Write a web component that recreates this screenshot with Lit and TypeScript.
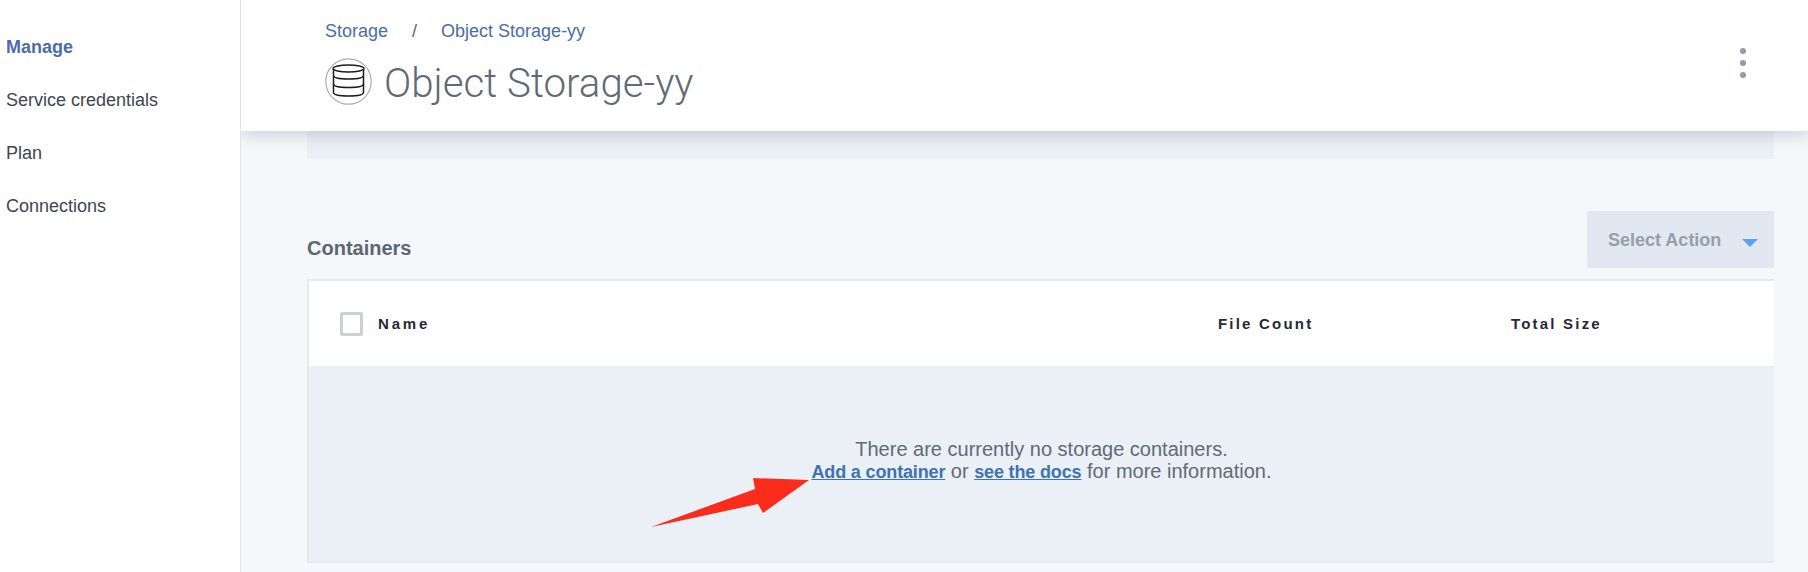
import { LitElement, html, css } from 'lit';
import { customElement } from 'lit/decorators.js';

@customElement('app-root')
export class AppRoot extends LitElement {
  static styles = css`
    :host {
      display: block;
      width: 1808px;
      height: 572px;
      overflow: hidden;
      font-family: 'Liberation Sans', Arial, sans-serif;
      background: #f5f7fb;
    }
    .page {
      display: flex;
      height: 572px;
    }
    .sidebar {
      position: relative;
      z-index: 2;
      box-sizing: border-box;
      flex: none;
      width: 241px;
      padding: 21px 0 0 6px;
      background: #fff;
      border-right: 1px solid #dfe3e8;
      font-size: 18px;
      color: #3d4650;
    }
    .sidebar div {
      height: 52.9px;
      line-height: 52.9px;
    }
    .sidebar .active {
      color: #4a6da7;
      font-weight: 700;
    }
    .main {
      position: relative;
      flex: 1;
      min-width: 0;
    }
    .header {
      position: relative;
      z-index: 1;
      box-sizing: border-box;
      display: flex;
      justify-content: space-between;
      height: 131px;
      padding: 21px 62px 0 84px;
      background: #fff;
      box-shadow: 0 3px 16px rgba(60, 70, 85, 0.24);
    }
    .crumbs {
      display: flex;
      gap: 24px;
      font-size: 18px;
      line-height: 20px;
      color: #4a6da7;
    }
    .crumbs .sep {
      color: #5a6872;
    }
    .title {
      display: flex;
      align-items: center;
      gap: 12px;
      margin-top: 18px;
      height: 48px;
      font-family: Roboto, 'Liberation Sans', sans-serif;
      font-size: 40.25px;
      font-weight: 300;
      color: #5f6b76;
    }
    .title svg {
      flex: none;
      margin-bottom: 3px;
    }
    .dots {
      display: flex;
      flex-direction: column;
      gap: 6px;
      padding-top: 27px;
    }
    .dots i {
      width: 6px;
      height: 6px;
      border-radius: 50%;
      background: #959aa3;
    }
    .content {
      padding: 0 34px 0 66px;
    }
    .strip {
      height: 28px;
      background: #ebeff6;
    }
    .bar {
      display: flex;
      justify-content: space-between;
      align-items: flex-end;
      margin-top: 52px;
      height: 57px;
    }
    .bar h2 {
      margin: 0 0 9px;
      font-size: 20px;
      line-height: 22px;
      color: #5a6872;
    }
    .select {
      box-sizing: border-box;
      display: flex;
      align-items: center;
      gap: 21px;
      width: 187px;
      height: 57px;
      padding: 2px 0 0 21px;
      background: #e1e8f2;
      font-size: 18px;
      font-weight: 700;
      color: #95a0ab;
    }
    .select::after {
      content: '';
      margin-top: 4px;
      border-style: solid;
      border-width: 8px 8px 0;
      border-color: #5aa2f5 transparent transparent;
    }
    .table {
      box-sizing: border-box;
      margin-top: 11px;
      height: 284px;
      border: 2px solid #e6e9ef;
      border-right: 0;
    }
    .head {
      display: grid;
      grid-template-columns: 909px 293px 1fr;
      align-items: center;
      height: 85px;
      background: #fff;
      font-size: 15px;
      font-weight: 700;
      letter-spacing: 2.2px;
      color: #1f2a36;
    }
    .name {
      display: flex;
      align-items: center;
      gap: 15px;
      padding-left: 31px;
    }
    .name span:last-child {
      letter-spacing: 2.8px;
    }
    .check {
      box-sizing: border-box;
      width: 23px;
      height: 24px;
      border: 3px solid #ccd0d6;
      border-radius: 2px;
    }
    .empty {
      box-sizing: border-box;
      height: 195px;
      padding-top: 72px;
      background: #ebeff6;
      text-align: center;
      font-size: 20px;
      line-height: 22px;
      color: #5f6b76;
    }
    .empty a {
      font-size: 18px;
      color: #3e73b0;
      font-weight: 700;
      letter-spacing: -0.15px;
      text-decoration: underline;
    }
    .arrow {
      position: absolute;
      left: 0;
      top: 0;
      pointer-events: none;
    }
  `;

  render() {
    return html`
      <div class="page">
        <nav class="sidebar">
          <div class="active">Manage</div>
          <div>Service credentials</div>
          <div>Plan</div>
          <div>Connections</div>
        </nav>
        <div class="main">
          <header class="header">
            <div>
              <div class="crumbs">
                <span>Storage</span><span class="sep">/</span><span>Object Storage-yy</span>
              </div>
              <div class="title">
                <svg width="47" height="47" viewBox="0 0 47 47" fill="none" stroke="#1d1d1f" stroke-width="1.5">
                  <circle cx="23.500" cy="23.500" r="22.700" stroke="#a9abae" stroke-width="1.2" />
                  <ellipse cx="23.500" cy="10.500" rx="15.500" ry="3.500" />
                  <path d="M8.500 11v6.500c0 2.500 6.500 3.500 15 3.500s15-1 15-3.500V11" />
                  <path d="M8.500 18v8c0 2.500 6.500 3.500 15 3.500s15-1 15-3.500v-8" />
                  <path d="M8.500 26v8.500c0 2.500 6.500 3.500 15 3.500s15-1 15-3.500V26" />
                </svg>
                <span>Object Storage-yy</span>
              </div>
            </div>
            <div class="dots"><i></i><i></i><i></i></div>
          </header>
          <div class="content">
            <div class="strip"></div>
            <div class="bar">
              <h2>Containers</h2>
              <div class="select">Select Action</div>
            </div>
            <div class="table">
              <div class="head">
                <div class="name"><span class="check"></span><span>Name</span></div>
                <div>File Count</div>
                <div>Total Size</div>
              </div>
              <div class="empty">
                There are currently no storage containers.<br />
                <a>Add a container</a> or <a>see the docs</a> for more information.
              </div>
            </div>
          </div>
          <svg class="arrow" width="1567" height="572">
            <polygon points="512,478 568,480 522,513 517,504 410,527 514,489" fill="#fb2c1c" />
          </svg>
        </div>
      </div>
    `;
  }
}
